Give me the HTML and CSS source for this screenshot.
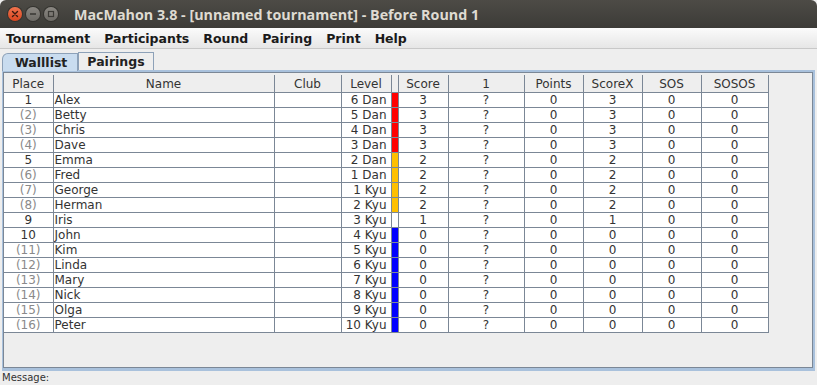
FILE: index.html
```html
<!DOCTYPE html>
<html lang="en">
<head>
    <meta charset="UTF-8">
    <title>MacMahon 3.8</title>
    <link rel="stylesheet" href="styles.css">
</head>
<body>
    <div class="window">
        <header class="titlebar">
            <div class="controls">
                <span class="btn close">
                    <svg width="14" height="14" viewBox="0 0 14 14"><path d="M4.5 4.5l5 5M9.5 4.5l-5 5" stroke="#3a1a10" stroke-width="1.4" stroke-linecap="round"/></svg>
                </span>
                <span class="btn">
                    <svg width="14" height="14" viewBox="0 0 14 14"><path d="M4 7h6" stroke="#3c3b37" stroke-width="1.6"/></svg>
                </span>
                <span class="btn">
                    <svg width="14" height="14" viewBox="0 0 14 14"><rect x="4.5" y="4.5" width="5" height="5" fill="none" stroke="#3c3b37" stroke-width="1.2"/></svg>
                </span>
            </div>
            <div class="title">MacMahon 3.8 - [unnamed tournament] - Before Round 1</div>
        </header>

        <nav class="menubar">
            <span>Tournament</span>
            <span>Participants</span>
            <span>Round</span>
            <span>Pairing</span>
            <span>Print</span>
            <span>Help</span>
        </nav>

        <div class="tabs">
            <span class="tab active">Walllist</span>
            <span class="tab">Pairings</span>
        </div>

        <main class="panel">
            <div class="panel-inner">
                <table class="walllist">
                    <colgroup>
                        <col class="c-place"><col class="c-name"><col class="c-club"><col class="c-level"><col class="c-bar">
                        <col class="c-score"><col class="c-round"><col class="c-points"><col class="c-scorex"><col class="c-sos"><col class="c-sosos">
                    </colgroup>
                    <thead>
                        <tr>
                            <th>Place</th><th>Name</th><th>Club</th><th>Level</th><th></th>
                            <th>Score</th><th>1</th><th>Points</th><th>ScoreX</th><th>SOS</th><th>SOSOS</th>
                        </tr>
                    </thead>
                    <tbody id="rows"></tbody>
                </table>
            </div>
        </main>

        <footer class="message">Message:</footer>
    </div>

    <script>
        const players = [
            ['1', 'Alex', '6 Dan', 'red', 3],
            ['(2)', 'Betty', '5 Dan', 'red', 3],
            ['(3)', 'Chris', '4 Dan', 'red', 3],
            ['(4)', 'Dave', '3 Dan', 'red', 3],
            ['5', 'Emma', '2 Dan', 'gold', 2],
            ['(6)', 'Fred', '1 Dan', 'gold', 2],
            ['(7)', 'George', '1 Kyu', 'gold', 2],
            ['(8)', 'Herman', '2 Kyu', 'gold', 2],
            ['9', 'Iris', '3 Kyu', 'none', 1],
            ['10', 'John', '4 Kyu', 'blue', 0],
            ['(11)', 'Kim', '5 Kyu', 'blue', 0],
            ['(12)', 'Linda', '6 Kyu', 'blue', 0],
            ['(13)', 'Mary', '7 Kyu', 'blue', 0],
            ['(14)', 'Nick', '8 Kyu', 'blue', 0],
            ['(15)', 'Olga', '9 Kyu', 'blue', 0],
            ['(16)', 'Peter', '10 Kyu', 'blue', 0]
        ];

        const tbody = document.getElementById('rows');
        players.forEach(p => {
            const tr = document.createElement('tr');
            const tied = p[0].startsWith('(') ? ' tied' : '';
            tr.innerHTML =
                '<td class="place' + tied + '">' + p[0] + '</td>' +
                '<td class="name">' + p[1] + '</td>' +
                '<td></td>' +
                '<td class="level">' + p[2] + '</td>' +
                '<td class="bar ' + p[3] + '"></td>' +
                '<td>' + p[4] + '</td>' +
                '<td>?</td>' +
                '<td>0</td>' +
                '<td>' + p[4] + '</td>' +
                '<td>0</td>' +
                '<td>0</td>';
            tbody.appendChild(tr);
        });
    </script>
</body>
</html>
```

FILE: styles.css
```css
html, body {
    margin: 0;
    padding: 0;
}

body {
    width: 817px;
    height: 385px;
    overflow: hidden;
    background-color: #eeeeee;
    font-family: 'DejaVu Sans', Verdana, sans-serif;
    color: #333333;
}

.window {
    display: flex;
    flex-direction: column;
    height: 385px;
}

.titlebar {
    height: 28px;
    display: flex;
    align-items: center;
    background: linear-gradient(#4d4b46, #3c3b37);
    border-radius: 6px 6px 0 0;
}

.controls {
    display: flex;
    gap: 4px;
    padding-left: 8px;
    width: 60px;
}

.btn {
    width: 14px;
    height: 14px;
    border-radius: 50%;
    background: linear-gradient(#8a8782, #6d6b66);
    box-shadow: 0 0 0 1px #34332f;
    display: flex;
}

.btn.close {
    background: linear-gradient(#f1734d, #d9461f);
}

.title {
    padding-left: 6px;
    font-family: 'Open Sans', 'DejaVu Sans', sans-serif;
    font-weight: bold;
    font-size: 14.3px;
    color: #dfdbd2;
}

.menubar {
    height: 20px;
    display: flex;
    align-items: center;
    gap: 14px;
    padding-left: 6px;
    background: linear-gradient(#fbfbfb, #e6e6e6);
    border-bottom: 1px solid #c8c8c8;
    font-size: 12.5px;
    font-weight: bold;
    color: #1a1a1a;
}

.tabs {
    height: 19px;
    display: flex;
    align-items: flex-end;
    padding: 2px 0 0 2px;
}

.tab {
    height: 17px;
    padding: 0 8px 0 8px;
    border: 1px solid #8da1b8;
    border-bottom: none;
    font-size: 12.5px;
    font-weight: bold;
    line-height: 17px;
    color: #222222;
    background-color: #eeeeee;
}

.tab.active {
    padding-left: 12px;
    padding-right: 10px;
    background-color: #c9dcef;
    border-radius: 6px 0 0 0;
    position: relative;
    z-index: 1;
    margin-bottom: -1px;
}

.panel {
    margin: 0 2px 0 2px;
    height: 301px;
    border: 1px solid #a9c1dc;
    border-top: 2px solid #a9c1dc;
    border-bottom: 3px solid #a9c1dc;
    border-right: 2px solid #a9c1dc;
    box-sizing: border-box;
    background-color: #d6e3f0;
}

.panel-inner {
    height: 100%;
    box-sizing: border-box;
    border: 1px solid #7b8796;
    background-color: #eeeeee;
    padding-top: 2px;
}

.walllist {
    border-collapse: collapse;
    table-layout: fixed;
    width: 764px;
    font-size: 12px;
}

.c-place { width: 49px; }
.c-name { width: 221px; }
.c-club { width: 67px; }
.c-level { width: 50px; }
.c-bar { width: 7px; }
.c-score { width: 50px; }
.c-round { width: 76px; }
.c-points { width: 59px; }
.c-scorex { width: 59px; }
.c-sos { width: 59px; }
.c-sosos { width: 67px; }

.walllist th {
    height: 17px;
    padding: 0;
    font-weight: normal;
    color: #333333;
    background-color: #eeeeee;
    border: 1px solid #7b8796;
    border-top: none;
    border-left-color: #9aa5b1;
}

.walllist th:first-child {
    border-left: none;
}

.walllist td {
    height: 14px;
    padding: 0;
    line-height: 14px;
    text-align: center;
    background-color: #ffffff;
    border: 1px solid #7b8796;
    white-space: nowrap;
    overflow: hidden;
}

.walllist td:first-child {
    border-left: none;
}

.walllist td.place.tied {
    color: #8a8a8a;
}

.walllist td.name {
    text-align: left;
    padding-left: 1px;
}

.walllist td.level {
    text-align: right;
    padding-right: 4px;
}

.walllist td.bar.red { background-color: #ff0000; }
.walllist td.bar.gold { background-color: #ffc000; }
.walllist td.bar.blue { background-color: #0000ff; }

.message {
    height: 14px;
    padding-left: 2px;
    font-size: 10px;
    line-height: 14px;
    color: #333333;
}
```
